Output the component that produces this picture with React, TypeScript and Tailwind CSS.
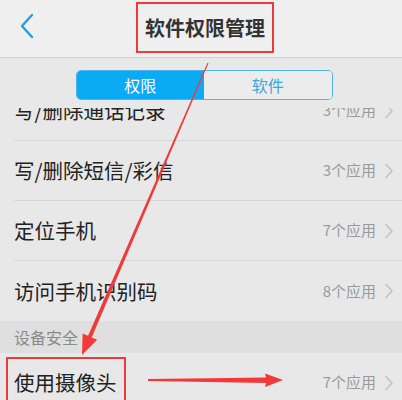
import React from "react";

const rows = [
  { name: "写/删除通话记录", count: "3个应用" },
  { name: "写/删除短信/彩信", count: "3个应用" },
  { name: "定位手机", count: "7个应用" },
  { name: "访问手机识别码", count: "8个应用" },
];

function Chevron() {
  return (
    <svg width="10" height="16" viewBox="0 0 10 16" className="ml-[8px]">
      <path d="M2 1.5 L8 8 L2 14.5" fill="none" stroke="#c2c2c2" strokeWidth="1.6" strokeLinecap="round" strokeLinejoin="round" />
    </svg>
  );
}

function Row({ name, count, last, boxed }: { name: string; count: string; last?: boolean; boxed?: boolean }) {
  return (
    <div className="relative h-[60px] pl-[14px] flex items-center">
      <div className={`flex-1 h-full flex items-center pr-[8px] ${last ? "" : "border-b border-[#d6d6d6]"}`}>
        <span className="flex-1 text-[20.5px] text-[#222]">{name}</span>
        <span className="text-[15px] text-[#9a9a9a]">{count}</span>
        <Chevron />
      </div>
      {/* 红框标注 */}
      {boxed && <div className="absolute left-[6px] top-[4px] w-[120px] h-[70px] border-2 border-[#ee3a3a]" />}
    </div>
  );
}

export default function App() {
  return (
    <div className="relative w-[402px] h-[400px] overflow-hidden bg-[#e8e8e8]" style={{ fontFamily: '"Noto Sans CJK SC", "Noto Sans", sans-serif' }}>
      {/* 顶部标题栏 */}
      <div className="h-[58px] bg-[#efefef] border-b border-[#cfcfcf] flex items-start justify-center relative">
        <svg width="16" height="26" viewBox="0 0 16 26" className="absolute left-[19px] top-[13px]">
          <path d="M13 2 L3 13 L13 24" fill="none" stroke="#2a9be0" strokeWidth="2.4" strokeLinecap="round" strokeLinejoin="round" />
        </svg>
        <div className="mt-[2px] ml-[8px] h-[51px] px-[7px] border-2 border-[#ee3a3a] flex items-center">
          <span className="text-[20px] font-bold text-[#333]">软件权限管理</span>
        </div>
      </div>

      {/* 列表 */}
      <div className="relative h-[342px] overflow-hidden">
        {/* 分段选择 */}
        <div className="absolute top-0 left-0 right-0 z-10 h-[50px] bg-[#e8e8e8] flex justify-center pt-[12px]">
          <div className="ml-[6px] flex w-[257px] h-[30px] rounded-[5px] border border-[#4cb3ec] overflow-hidden">
            <div className="w-1/2 bg-[#0aaaf5] text-white text-[16px] flex items-center justify-center">权限</div>
            <div className="w-1/2 bg-[#ececec] text-[#3aa6e2] text-[16px] flex items-center justify-center">软件</div>
          </div>
        </div>

        <div className="mt-[23px]">
          {rows.map((r, i) => (
            <Row key={i} name={r.name} count={r.count} last={i === rows.length - 1} />
          ))}
          <div className="h-[32px] bg-[#dfdfdf] pl-[14px] flex items-center text-[16px] text-[#8a8a8a]">设备安全</div>
          <Row name="使用摄像头" count="7个应用" boxed />
        </div>
      </div>

      {/* 红色箭头标注 */}
      <svg className="absolute inset-0 pointer-events-none z-20" width="402" height="400" viewBox="0 0 402 400">
        <polygon
          points="208.5,63.2 91.7,337.4 97.2,339.8 82,355 82.6,333.4 88.1,335.8 207.5,62.8"
          fill="#f03a3a"
        />
        <polygon points="148,379 266,377.5 265,373.5 283,380 265,387 266,383 148,381" fill="#f03a3a" />
      </svg>
    </div>
  );
}
